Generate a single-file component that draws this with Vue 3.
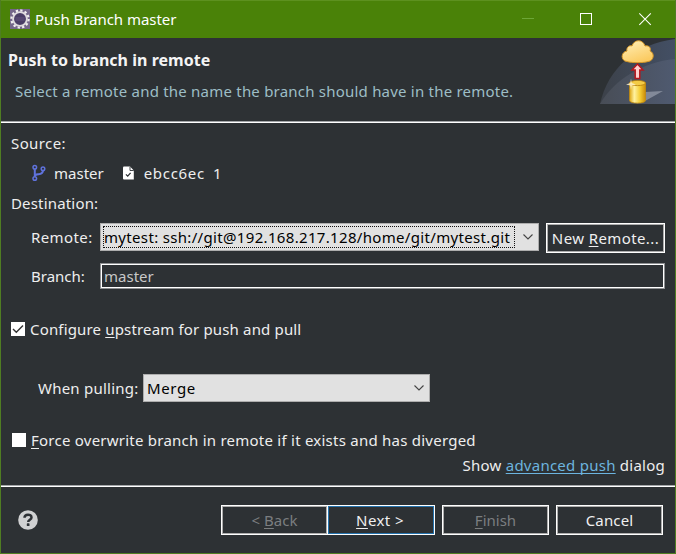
<script setup>
import { ref } from 'vue'

const upstream = ref(true)
const force = ref(false)
const branch = ref('master')
</script>

<template>
  <div class="window">
    <header class="titlebar">
      <svg class="app-icon" width="20" height="20" viewBox="0 0 20 20">
        <rect width="20" height="20" fill="#75678a" />
        <circle cx="10" cy="10" r="8.6" fill="none" stroke="#f1eff0" stroke-width="2.2" stroke-dasharray="2.3 2.2" />
        <circle cx="10" cy="10" r="6.900" fill="#4a3d66" stroke="#dedade" stroke-width="1.900" />
        <path d="M5.500 9h9M5.500 11h9" stroke="#6b5c86" stroke-width=".8" />
      </svg>
      <span class="t title">Push Branch master</span>
      <svg class="controls" width="135" height="36" viewBox="0 0 135 36">
        <path d="M0 16.500h12" stroke="#6da637" />
        <rect x="58.500" y="11.500" width="11" height="11" fill="none" stroke="#fff" />
        <path d="M117.300 11.300l11.500 11.500M128.800 11.300l-11.500 11.500" stroke="#fff" stroke-width="1.100" />
      </svg>
    </header>

    <section class="banner">
      <div class="banner-text">
        <h1 class="t heading">Push to branch in remote</h1>
        <p class="t subtitle">Select a remote and the name the branch should have in the remote.</p>
      </div>
      <svg class="art" width="75" height="66" viewBox="0 0 75 66">
        <defs>
          <linearGradient id="sky" x1="0" y1="0" x2="1" y2="0">
            <stop offset="0" stop-color="#3c4149" />
            <stop offset="1" stop-color="#434f64" />
          </linearGradient>
          <linearGradient id="hill" x1="0" y1="0" x2="1" y2="0">
            <stop offset="0" stop-color="#484d56" />
            <stop offset="1" stop-color="#4f5a70" />
          </linearGradient>
          <linearGradient id="gold" x1="0" y1="0" x2="1" y2="0">
            <stop offset="0" stop-color="#dda511" />
            <stop offset=".3" stop-color="#fff2a0" />
            <stop offset=".65" stop-color="#f5ce35" />
            <stop offset="1" stop-color="#c98b08" />
          </linearGradient>
          <linearGradient id="cloud" x1="0" y1="0" x2=".5" y2="1">
            <stop offset="0" stop-color="#fff0ba" />
            <stop offset="1" stop-color="#fbcb62" />
          </linearGradient>
        </defs>
        <path d="M0 66C8 30 36 6 75 1V66z" fill="url(#sky)" />
        <path d="M0 66C14 42 42 24 75 21V66z" fill="url(#hill)" />
        <path d="M45 54L63 53 45 63z" fill="#949baa" opacity=".75" />
        <path d="M27 23.500C20.500 23 20.500 14 27 13C26 9 30 7 32 8C34 1 43 1 45 8C50 7 51 11 50 13C55 15 54 23 48 23.500C44 25 31 25 27 23.500z" fill="url(#cloud)" stroke="#d99a28" />
        <path d="M37.500 26L43 32H39.800V40.500H35.200V32H32z" fill="#ffd0cf" stroke="#b5161d" stroke-width="1.500" />
        <path d="M29.500 45V62.500C29.500 66 45.500 66 45.500 62.500V45z" fill="url(#gold)" stroke="#c18a10" stroke-width=".8" />
        <ellipse cx="37.500" cy="45" rx="8" ry="2.600" fill="#f3cb45" stroke="#b57e0d" stroke-width=".8" />
        <path d="M31 40.500L31.700 45 36 46.500 31.700 47.500 31 52 30.300 47.500 26 46.500 30.300 45z" fill="#fff3cc" opacity=".85" />
      </svg>
    </section>
    <div class="rule"></div>

    <main class="body">
      <div class="row source"><span class="t w-source">Source:</span></div>
      <div class="row commit">
        <svg class="git" width="14" height="18" viewBox="0 0 14 18">
          <g fill="none" stroke="#5f72dc" stroke-width="1.500">
            <circle cx="2.800" cy="3.300" r="1.800" />
            <circle cx="2.800" cy="14.500" r="1.800" />
            <circle cx="11" cy="4.800" r="1.800" />
            <path d="M2.800 5v7.800M11 6.500c0 3.500-2.500 3.500-5 3.800C4 10.500 2.800 11 2.800 12.500" stroke-width="2" />
          </g>
        </svg>
        <span class="t w-master">master</span>
        <svg class="doc" width="11" height="14" viewBox="0 0 11 14">
          <path d="M1 .5H7L10.800 4.500V13.500H1Q0 13.500 0 12.500V1.500Q0 .5 1 .5z" fill="#fff" />
          <path d="M7 .8V4.500H10.700" fill="none" stroke="#2d3135" stroke-width=".9" />
          <path d="M2.900 8.400L4.700 10.100 7.600 6.900" fill="none" stroke="#2d3135" stroke-width="1.300" />
        </svg>
        <span class="t w-hash">ebcc6ec</span>
        <span class="t one">1</span>
      </div>
      <div class="row dest"><span class="t w-dest">Destination:</span></div>

      <div class="form-row remote">
        <label class="t w-remote">Remote:</label>
        <div class="combo focused">
          <span class="focus"><span class="t w-url">mytest: ssh://git@192.168.217.128/home/git/mytest.git</span></span>
          <svg class="chev" width="10" height="6" viewBox="0 0 10 6"><path d="M.5 .5L5 5 9.500 .5" fill="none" stroke="#444" stroke-width="1.100" /></svg>
        </div>
        <button class="btn new"><span class="t w-new">New <u>R</u>emote...</span></button>
      </div>
      <div class="form-row branch">
        <label class="t w-branch">Branch:</label>
        <div class="field"><span class="t w-field">{{ branch }}</span></div>
      </div>

      <div class="row check upstream" @click="upstream = !upstream">
        <span class="box"><svg v-if="upstream" width="14" height="14" viewBox="0 0 14 14"><path d="M2 7L5.300 10.300 12 3.500" fill="none" stroke="#333" stroke-width="1.400" /></svg></span>
        <span class="t w-up">Configure <u>u</u>pstream for push and pull</span>
      </div>

      <div class="form-row pulling">
        <label class="t w-pull">When pulling:</label>
        <div class="combo merge">
          <span class="t w-merge">Merge</span>
          <svg class="chev" width="10" height="6" viewBox="0 0 10 6"><path d="M.5 .5L5 5 9.500 .5" fill="none" stroke="#444" stroke-width="1.100" /></svg>
        </div>
      </div>

      <div class="row check force" @click="force = !force">
        <span class="box"><svg v-if="force" width="14" height="14" viewBox="0 0 14 14"><path d="M2 7L5.300 10.300 12 3.500" fill="none" stroke="#333" stroke-width="1.400" /></svg></span>
        <span class="t w-force"><u>F</u>orce overwrite branch in remote if it exists and has diverged</span>
      </div>
      <div class="row advanced"><span class="t w-adv">Show <a>advanced push</a> dialog</span></div>
    </main>
    <div class="rule"></div>

    <footer class="footer">
      <svg class="help" width="20" height="20" viewBox="0 0 20 20">
        <circle cx="10" cy="10" r="9.800" fill="#d0d1d2" />
        <path d="M6.500 7.800C6.500 3.700 13.500 3.700 13.500 7.400C13.500 9.700 10.200 9.700 10.200 12" fill="none" stroke="#2d3135" stroke-width="2.500" />
        <rect x="8.800" y="13.300" width="2.700" height="2.700" rx=".6" fill="#2d3135" />
      </svg>
      <button class="btn back disabled"><span class="t w-back">&lt; <u>B</u>ack</span></button>
      <button class="btn next"><span class="t w-next"><u>N</u>ext &gt;</span></button>
      <button class="btn finish disabled"><span class="t w-finish"><u>F</u>inish</span></button>
      <button class="btn cancel"><span class="t w-cancel">Cancel</span></button>
    </footer>
  </div>
</template>

<style>
body {
  background: #2d3134;
}
</style>

<style scoped>
* {
  box-sizing: border-box;
}
.window {
  width: 676px;
  height: 554px;
  display: flex;
  flex-direction: column;
  border: 1px solid #4f7d22;
  border-top: 0;
  background: #2d3134;
  color: #eeeeee;
  font: 15px/20px "Noto Sans", "Open Sans", sans-serif;
  overflow: hidden;
}
svg {
  display: block;
  flex: none;
}
.t {
  white-space: nowrap;
}
u,
a {
  text-decoration: underline;
  text-decoration-thickness: 1px;
  text-underline-offset: 2px;
  text-decoration-skip-ink: none;
}
.titlebar {
  height: 38px;
  display: flex;
  align-items: center;
  background: #4a8208;
  border-top: 1px solid #5d911f;
  padding-left: 9px;
}
.title {
  margin: -2px 0 0 5px;
  color: #fff;
  letter-spacing: -0.04px;
}
.app-icon {
  margin-top: -1px;
}
.controls {
  margin-left: auto;
  margin-right: 18px;
}
.banner {
  height: 83px;
  display: flex;
  justify-content: space-between;
}
.banner-text {
  padding: 12px 0 0 7px;
}
.heading {
  margin: 0;
  font-size: 16px;
  line-height: 20px;
  font-weight: 700;
  color: #f4f4f4;
  letter-spacing: 0.03px;
}
.subtitle {
  margin: 11px 0 0 7px;
  color: #9dbec6;
  letter-spacing: 0.215px;
}
.rule {
  height: 2px;
  flex: none;
  background: #fff;
  border-top: 1px solid #a3a6a8;
}
.body {
  height: 362px;
  padding: 10px 10px 0;
}
.row {
  display: flex;
  align-items: center;
  height: 20px;
}
.w-source,
.w-remote,
.w-new {
  letter-spacing: 0.4px;
}
.commit {
  margin-top: 10px;
  padding-left: 21px;
}
.w-master {
  margin-left: 8px;
}
.doc {
  margin-left: 19px;
}
.w-hash {
  margin-left: 10px;
  letter-spacing: 0.7px;
}
.one {
  margin-left: 8px;
}
.dest {
  margin-top: 10px;
}
.w-dest {
  letter-spacing: 0.17px;
}
.form-row {
  display: flex;
}
.remote {
  margin-top: 10px;
  height: 30px;
  padding-left: 20px;
}
.remote label {
  width: 69px;
  padding-top: 4px;
}
.combo {
  height: 28px;
  display: flex;
  align-items: center;
  background: #e1e1e1;
  border: 1px solid #adadad;
  color: #000;
}
.focused {
  width: 439px;
  padding: 0 5px 0 2px;
}
.focus {
  width: 412px;
  height: 22px;
  border: 1px dotted #111;
  display: flex;
  align-items: center;
}
.w-url {
  letter-spacing: 0.33px;
}
.chev {
  margin-left: auto;
}
.btn {
  height: 30px;
  padding: 0;
  background: #2d3134;
  border: 1px solid #fff;
  box-shadow: inset 0 0 0 1px #adadad;
  color: #f0f0f0;
  font: inherit;
  text-align: center;
}
.new {
  width: 119px;
  margin-left: 7px;
}
.branch {
  margin-top: 10px;
  height: 26px;
  padding-left: 20px;
}
.branch label {
  width: 69px;
  padding-top: 3px;
}
.field {
  flex: 1;
  border: 1px solid #8e9092;
  box-shadow: inset 0 0 0 1px #fff;
  padding: 2px 0 0 3px;
  color: #c8c8c8;
}
.upstream {
  margin-top: 30px;
}
.w-up {
  letter-spacing: 0.16px;
}
.box {
  width: 14px;
  height: 14px;
  background: #fff;
}
.check .t {
  margin-left: 5px;
}
.pulling {
  margin-top: 35px;
  padding-left: 27px;
}
.pulling label {
  width: 105px;
  padding-top: 4px;
  letter-spacing: 0.23px;
}
.merge {
  width: 287px;
  padding: 0 5px 0 3px;
}
.w-merge {
  letter-spacing: 0.6px;
}
.force {
  margin-top: 28px;
  padding-left: 1px;
}
.w-force {
  letter-spacing: 0.24px;
}
.advanced {
  margin-top: 5px;
  justify-content: flex-end;
}
.w-adv {
  letter-spacing: 0.25px;
}
a {
  color: #6cb4df;
}
.footer {
  flex: 1;
  display: flex;
  padding: 18px 12px 0 17px;
}
.help {
  margin-top: 5px;
}
.back {
  width: 107px;
  margin-left: 183px;
}
.next {
  width: 108px;
  margin-left: -1px;
  padding-right: 2px;
  box-shadow: inset 0 0 0 1px #2473ae;
}
.w-next {
  letter-spacing: 0.4px;
}
.w-cancel {
  letter-spacing: 0.15px;
}
.finish {
  width: 107px;
  margin-left: 7px;
}
.cancel {
  width: 107px;
  margin-left: 7px;
}
.disabled {
  color: #7b7e80;
}
</style>
